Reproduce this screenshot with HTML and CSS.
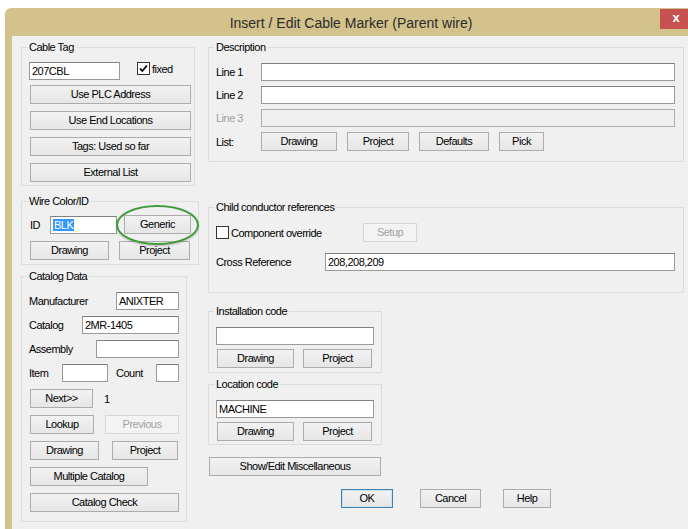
FILE: index.html
```html
<!DOCTYPE html>
<html lang="en">
<head>
<meta charset="utf-8">
<title>Insert / Edit Cable Marker (Parent wire)</title>
<link rel="stylesheet" href="styles.css">
</head>
<body>
<div class="window">
  <div class="titlebar">
    <span class="title">Insert / Edit Cable Marker (Parent wire)</span>
    <span class="close">x</span>
  </div>
  <div class="client">
    <div class="col-left">
      <fieldset class="group g-cable">
        <legend>Cable Tag</legend>
        <div class="row r-tag">
          <span class="edit w-tag">207CBL</span>
          <span class="check c-fixed"><span class="box"><svg viewBox="0 0 11 11" width="11" height="11"><path d="M2 5.5 L4.3 8 L9 2.5" fill="none" stroke="#000" stroke-width="1.8"/></svg></span>fixed</span>
        </div>
        <button class="btn w-full first">Use PLC Address</button>
        <button class="btn w-full">Use End Locations</button>
        <button class="btn w-full">Tags: Used so far</button>
        <button class="btn w-full">External List</button>
      </fieldset>

      <fieldset class="group g-wire">
        <legend>Wire Color/ID</legend>
        <div class="row r-id">
          <span class="lbl l-id">ID</span>
          <span class="edit w-id"><span class="sel">BLK</span></span>
          <button class="btn w-generic">Generic</button>
        </div>
        <div class="row r-pair">
          <button class="btn w-wdraw">Drawing</button>
          <button class="btn w-wproj">Project</button>
        </div>
        <span class="ring"></span>
      </fieldset>

      <fieldset class="group g-catalog">
        <legend>Catalog Data</legend>
        <div class="row r-first">
          <span class="lbl">Manufacturer</span>
          <span class="edit w-mfr">ANIXTER</span>
        </div>
        <div class="row r-next">
          <span class="lbl">Catalog</span>
          <span class="edit w-cat">2MR-1405</span>
        </div>
        <div class="row r-next">
          <span class="lbl">Assembly</span>
          <span class="edit w-asm"></span>
        </div>
        <div class="row r-next">
          <span class="lbl l-item">Item</span>
          <span class="edit w-item"></span>
          <span class="lbl l-count">Count</span>
          <span class="edit w-count"></span>
        </div>
        <div class="row r-btn">
          <button class="btn w-next">Next&gt;&gt;</button>
          <span class="lbl l-num">1</span>
        </div>
        <div class="row r-btn">
          <button class="btn w-lookup">Lookup</button>
          <button class="btn off w-prev">Previous</button>
        </div>
        <div class="row r-btn">
          <button class="btn w-cdraw">Drawing</button>
          <button class="btn w-cproj">Project</button>
        </div>
        <div class="row r-btn">
          <button class="btn w-multi">Multiple Catalog</button>
        </div>
        <div class="row r-btn">
          <button class="btn w-check">Catalog Check</button>
        </div>
      </fieldset>
    </div>

    <div class="col-right">
      <fieldset class="group g-desc">
        <legend>Description</legend>
        <div class="row r-first">
          <span class="lbl l-line">Line 1</span>
          <span class="edit w-line"></span>
        </div>
        <div class="row r-line">
          <span class="lbl l-line">Line 2</span>
          <span class="edit w-line"></span>
        </div>
        <div class="row r-line">
          <span class="lbl l-line dim">Line 3</span>
          <span class="edit off w-line"></span>
        </div>
        <div class="row r-list">
          <span class="lbl l-line">List:</span>
          <button class="btn w-ldraw">Drawing</button>
          <button class="btn w-lproj">Project</button>
          <button class="btn w-ldef">Defaults</button>
          <button class="btn w-lpick">Pick</button>
        </div>
      </fieldset>

      <fieldset class="group g-child">
        <legend>Child conductor references</legend>
        <div class="row r-first">
          <span class="check c-override"><span class="box"></span>Component override</span>
          <button class="btn off w-setup">Setup</button>
        </div>
        <div class="row r-xref">
          <span class="lbl l-xref">Cross Reference</span>
          <span class="edit w-xref">208,208,209</span>
        </div>
      </fieldset>

      <fieldset class="group g-code g-inst">
        <legend>Installation code</legend>
        <span class="edit w-code"></span>
        <div class="row r-code">
          <button class="btn w-kdraw">Drawing</button>
          <button class="btn w-kproj">Project</button>
        </div>
      </fieldset>

      <fieldset class="group g-code g-loc">
        <legend>Location code</legend>
        <span class="edit w-code">MACHINE</span>
        <div class="row r-code">
          <button class="btn w-kdraw">Drawing</button>
          <button class="btn w-kproj">Project</button>
        </div>
      </fieldset>

      <button class="btn w-misc">Show/Edit Miscellaneous</button>

      <div class="row r-dialog">
        <button class="btn default w-ok">OK</button>
        <button class="btn w-cancel">Cancel</button>
        <button class="btn w-help">Help</button>
      </div>
    </div>
  </div>
</div>
</body>
</html>
```

FILE: styles.css
```css
* { box-sizing: border-box; }

html, body {
  margin: 0;
  height: 100%;
}

body {
  background: #ffffff;
  overflow: hidden;
  font-family: "Liberation Sans", Arial, sans-serif;
  font-size: 11px;
  letter-spacing: -0.5px;
  color: #000;
}

/* window frame */
.window {
  margin: 8px 0 0 5px;
  width: 692px;
  height: 540px;
  background: #d4c28c;
  border-radius: 6px 6px 0 0;
  padding: 0 7px;
  display: flex;
  flex-direction: column;
}

.titlebar {
  position: relative;
  height: 28px;
  flex: none;
  display: flex;
  align-items: center;
  justify-content: center;
}

.title {
  font-size: 14px;
  letter-spacing: 0;
  color: #2b2b2b;
  padding-top: 1px;
}

.close {
  position: absolute;
  top: 1px;
  right: -2px;
  width: 32px;
  height: 20px;
  background: #c75050;
  color: #fff;
  font-weight: bold;
  font-size: 13px;
  letter-spacing: 0;
  line-height: 18px;
  text-align: center;
}

.client {
  flex: 1;
  background: #f0f0f0;
  display: flex;
  align-items: flex-start;
  padding: 5px 0 0 9px;
  gap: 9px;
}

.col-left, .col-right {
  display: flex;
  flex-direction: column;
  align-items: flex-start;
}

.col-left { width: 178px; }

/* group boxes */
.group {
  position: relative;
  margin: 0;
  border: 1px solid #dcdcdc;
  border-radius: 0;
  padding: 0 7px 0 7px;
  min-width: 0;
}

.group legend {
  padding: 0 2px;
  margin-left: -2px;
  line-height: 13px;
}

.row {
  display: flex;
  align-items: center;
}

.lbl { white-space: nowrap; }
.dim { color: #a0a0a0; }

/* edit fields */
.edit {
  display: block;
  height: 18px;
  flex: none;
  background: #fff;
  border: 1px solid #9a9a9a;
  border-top-color: #808080;
  padding: 0 2px;
  line-height: 16px;
  white-space: nowrap;
  overflow: hidden;
}

.edit.off {
  background: #f0f0f0;
  border-color: #acacac;
}

.sel {
  background: #3399ff;
  color: #fff;
  padding: 0 1px;
}

/* push buttons */
.btn {
  display: block;
  flex: none;
  height: 19px;
  margin: 0;
  padding: 0;
  font: inherit;
  letter-spacing: inherit;
  color: #000;
  line-height: 17px;
  text-align: center;
  border: 1px solid #acacac;
  border-radius: 0;
  background: linear-gradient(#f2f2f2, #e6e6e6);
}

.btn.off {
  color: #a2a2a2;
  border-color: #d6d6d6;
  background: #f3f3f3;
}

.btn.default {
  border-color: #3c7fb1;
  box-shadow: inset 0 0 0 1px #cfe3f5;
}

/* check boxes */
.check {
  display: flex;
  align-items: center;
  white-space: nowrap;
}

.check .box {
  width: 13px;
  height: 13px;
  border: 1px solid #333;
  background: #fff;
  margin-right: 2px;
  display: flex;
  align-items: center;
  justify-content: center;
}

/* ---------- Cable Tag ---------- */
.g-cable {
  width: 174px;
  padding-bottom: 3px;
}

.r-tag { margin-top: 8px; }
.w-tag { width: 91px; }
.c-fixed { margin-left: 17px; align-self: flex-start; }

.w-full { width: 161px; margin-left: 1px; margin-top: 7px; }
.w-full.first { margin-top: 5px; }

/* ---------- Wire Color/ID ---------- */
.g-wire {
  width: 178px;
  margin-top: 9px;
  padding-bottom: 4px;
}

.r-id { margin-top: 7px; }
.l-id { width: 21px; padding-left: 1px; }
.w-id { width: 67px; }
.w-generic { width: 67px; margin-left: 7px; }

.r-pair { margin-top: 7px; }
.w-wdraw { width: 79px; margin-left: 1px; }
.w-wproj { width: 71px; margin-left: 10px; }

.ring {
  position: absolute;
  left: 94px;
  top: -3px;
  width: 83px;
  height: 40px;
  border: 2px solid #3f9a3a;
  border-radius: 50%;
  box-shadow: 0 1px 2px rgba(0, 0, 0, 0.25);
  pointer-events: none;
}

/* ---------- Catalog Data ---------- */
.g-catalog {
  width: 166px;
  margin-top: 5px;
  padding-bottom: 9px;
}

.g-catalog .row { width: 150px; }
.g-catalog .r-first { margin-top: 9px; }
.g-catalog .r-next { margin-top: 6px; }
.g-catalog .r-btn { margin-top: 7px; }

.w-mfr { width: 63px; margin-left: auto; }
.w-cat { width: 97px; margin-left: auto; }
.w-asm { width: 83px; margin-left: auto; }

.l-item { width: 33px; }
.w-item { width: 46px; }
.l-count { width: 41px; padding-left: 8px; }
.w-count { width: 23px; margin-left: auto; }

.w-next { width: 63px; margin-left: 1px; }
.l-num { margin-left: 11px; }

.w-lookup { width: 64px; margin-left: 1px; }
.w-prev { width: 74px; margin-left: 11px; }

.w-cdraw { width: 69px; margin-left: 1px; }
.w-cproj { width: 66px; margin-left: 13px; }

.w-multi { width: 118px; margin-left: 1px; }
.w-check { width: 149px; margin-left: 1px; }

/* ---------- Description ---------- */
.g-desc {
  width: 476px;
  padding-bottom: 10px;
}

.g-desc .r-first { margin-top: 9px; }
.r-line { margin-top: 5px; }
.l-line { width: 45px; }
.w-line { width: 414px; }

.r-list { margin-top: 5px; }
.w-ldraw { width: 76px; }
.w-lproj { width: 62px; margin-left: 10px; }
.w-ldef { width: 70px; margin-left: 10px; }
.w-lpick { width: 45px; margin-left: 10px; }

/* ---------- Child conductor references ---------- */
.g-child {
  width: 476px;
  margin-top: 39px;
  padding-bottom: 21px;
}

.g-child .r-first { margin-top: 9px; }
.c-override { width: 147px; }
.w-setup { width: 54px; }

.r-xref { margin-top: 11px; }
.l-xref { width: 109px; }
.w-xref { width: 350px; }

/* ---------- Installation / Location code ---------- */
.g-code {
  width: 174px;
  padding-bottom: 4px;
}

.g-inst { margin-top: 12px; }
.g-loc { margin-top: 5px; padding-bottom: 3px; }

.w-code { width: 158px; margin-top: 9px; }
.r-code { margin-top: 4px; }
.w-kdraw { width: 77px; margin-left: 1px; }
.w-kproj { width: 69px; margin-left: 9px; }

.w-misc { width: 172px; margin-left: 1px; margin-top: 12px; }

/* ---------- dialog buttons ---------- */
.r-dialog { margin-top: 13px; margin-left: 133px; }
.w-ok { width: 52px; }
.w-cancel { width: 61px; margin-left: 27px; }
.w-help { width: 48px; margin-left: 22px; }
```
